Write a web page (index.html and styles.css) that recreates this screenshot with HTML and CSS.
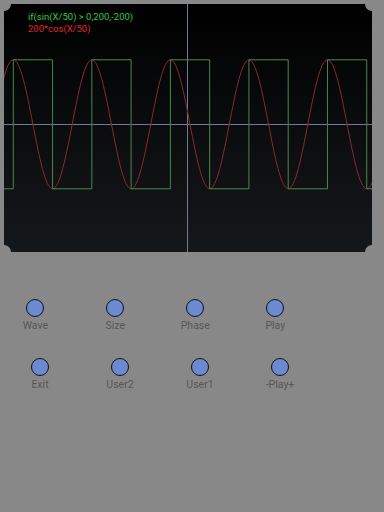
FILE: index.html
```html
<!DOCTYPE html>
<html>
<head>
<meta charset="utf-8">
<link rel="stylesheet" href="styles.css">
</head>
<body>
<div class="scope">
  <svg class="scope-svg" width="368" height="248" viewBox="0 0 368 248">
    <defs>
      <linearGradient id="bg" x1="0" y1="0" x2="0" y2="1">
        <stop offset="0" stop-color="#000000"/>
        <stop offset="1" stop-color="#15181b"/>
      </linearGradient>
      <clipPath id="shape">
        <path d="M7 0 H361 A7 7 0 0 0 368 7 V241 A7 7 0 0 0 361 248 H7 A7 7 0 0 0 0 241 V7 A7 7 0 0 0 7 0 Z"/>
      </clipPath>
    </defs>
    <path d="M7 0 H361 A7 7 0 0 0 368 7 V241 A7 7 0 0 0 361 248 H7 A7 7 0 0 0 0 241 V7 A7 7 0 0 0 7 0 Z" fill="url(#bg)"/>
    <g clip-path="url(#shape)" fill="none" stroke-width="1">
      <line x1="0" y1="120.5" x2="368" y2="120.5" stroke="#737a90"/>
      <line x1="183.5" y1="0" x2="183.5" y2="248" stroke="#737a90"/>
      <path stroke="#8a2a2e" d="M-29.97 184.8 C-15.7 184.8 -4.97 55.8 9.3 55.8 S34.3 184.8 48.57 184.8 S73.57 55.8 87.84 55.8 S112.84 184.8 127.11 184.8 S152.11 55.8 166.38 55.8 S191.38 184.8 205.65 184.8 S230.65 55.8 244.92 55.8 S269.92 184.8 284.19 184.8 S309.19 55.8 323.46 55.8 S348.46 184.8 362.73 184.8 S387.73 55.8 402 55.8"/>
      <polyline stroke="#4d8650" points="0,184.8 9.3,184.8 9.3,55.8 48.57,55.8 48.57,184.8 87.84,184.8 87.84,55.8 127.11,55.8 127.11,184.8 166.38,184.8 166.38,55.8 205.65,55.8 205.65,184.8 244.92,184.8 244.92,55.8 284.19,55.8 284.19,184.8 323.46,184.8 323.46,55.8 362.73,55.8 362.73,184.8 368,184.8"/>
    </g>
  </svg>
  <div class="legend">
    <div class="legend-green">if(sin(X/50) &gt; 0,200,-200)</div>
    <div class="legend-red">200*cos(X/50)</div>
  </div>
</div>

<div class="controls">
  <div class="row row-first">
    <div class="cell"><div class="knob"></div><div class="label">Wave</div></div>
    <div class="cell"><div class="knob"></div><div class="label">Size</div></div>
    <div class="cell"><div class="knob"></div><div class="label">Phase</div></div>
    <div class="cell"><div class="knob"></div><div class="label">Play</div></div>
  </div>
  <div class="row">
    <div class="cell"><div class="knob"></div><div class="label">Exit</div></div>
    <div class="cell"><div class="knob"></div><div class="label">User2</div></div>
    <div class="cell"><div class="knob"></div><div class="label">User1</div></div>
    <div class="cell"><div class="knob"></div><div class="label">-Play+</div></div>
  </div>
</div>
</body>
</html>
```
FILE: styles.css
```css
html, body {
  margin: 0;
  padding: 0;
}
body {
  width: 384px;
  height: 512px;
  background: #888888;
  font-family: Roboto, "Liberation Sans", sans-serif;
  overflow: hidden;
}
.scope {
  position: relative;
  width: 368px;
  height: 248px;
  margin: 4px 0 0 4px;
}
.scope-svg {
  display: block;
}
.legend {
  position: absolute;
  left: 24px;
  top: 7px;
  font-size: 9.5px;
  line-height: 12px;
  white-space: nowrap;
}
.legend-green {
  color: #35c83a;
}
.legend-red {
  color: #e0262a;
}
.controls {
  padding-top: 47px;
  display: flex;
  flex-direction: column;
  gap: 26.5px;
}
.row {
  display: flex;
}
.row-first {
  margin-left: -4.7px;
}
.cell {
  width: 80px;
  display: flex;
  flex-direction: column;
  align-items: center;
}
.knob {
  width: 16px;
  height: 16px;
  border: 1.5px solid #111111;
  border-radius: 50%;
  background: #6a8ad2;
}
.label {
  margin-top: 2.5px;
  font-size: 10.5px;
  line-height: 12px;
  color: #575757;
  white-space: nowrap;
}
```
